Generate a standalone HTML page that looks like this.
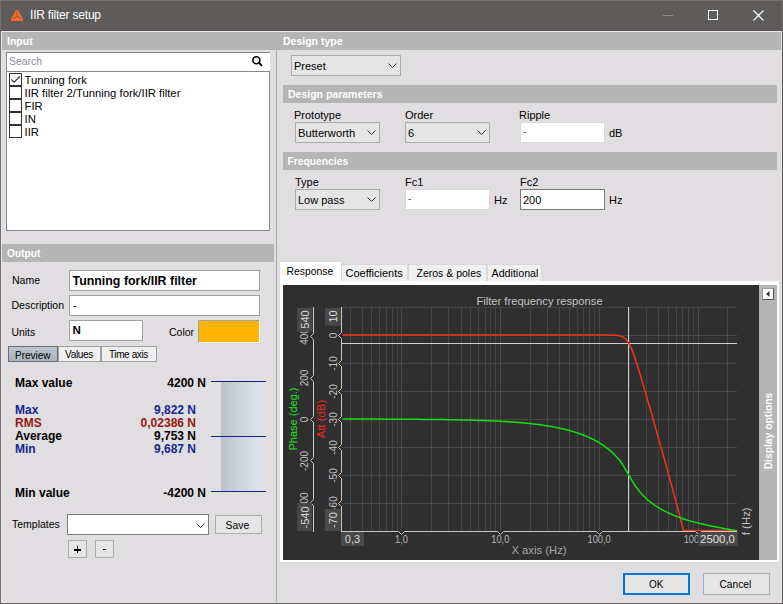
<!DOCTYPE html>
<html><head><meta charset="utf-8">
<style>
html,body{margin:0;padding:0;}
body{width:783px;height:604px;position:relative;overflow:hidden;background:#e0dee0;font-family:"Liberation Sans", sans-serif;font-size:11px;color:#000;}
.a{position:absolute;}
.t{position:absolute;white-space:nowrap;line-height:13px;}
.bar{position:absolute;background:#b5b5b5;height:18px;}
.combo{position:absolute;background:#e5e5e5;border:1px solid #acacac;box-sizing:border-box;}
.tb{position:absolute;background:#fff;box-sizing:border-box;}
.btn{position:absolute;background:#e5e5e5;border:1px solid #adadad;box-sizing:border-box;}
svg{display:block;}
</style></head><body>
<div class="a" style="left:0;top:0;width:783px;height:31px;background:#5d5c5a;"></div>
<svg class="a" style="left:10px;top:9px" width="14" height="13" viewBox="0 0 14 13">
<path d="M5.8 1.6 Q7 0 8.2 1.6 L13 10 Q13.6 11.9 11.8 11.9 L2.2 11.9 Q0.4 11.9 1 10 Z" fill="#f26b30"/>
<path d="M7 1.8 L7 7.4 M7 7.4 L2.3 9.9 M7 7.4 L11.7 9.9" stroke="#b0532a" stroke-width="1" fill="none"/>
</svg>
<div class="t" style="left:30px;top:8px;font-size:12px;font-weight:normal;color:#fff;line-height:14px;letter-spacing:-0.2px;">IIR filter setup</div>
<div class="a" style="left:663px;top:15px;width:10px;height:1px;background:#8c8b89;"></div>
<div class="a" style="left:708px;top:10px;width:8px;height:8px;border:1px solid #fff;"></div>
<svg class="a" style="left:753px;top:10px" width="11" height="11" viewBox="0 0 11 11"><path d="M0.5 0.5 L10.5 10.5 M10.5 0.5 L0.5 10.5" stroke="#fff" stroke-width="1.1"/></svg>
<div class="a" style="left:0;top:0;width:783px;height:1px;background:#71706e;"></div>
<div class="a" style="left:0;top:30px;width:783px;height:1px;background:#555452;"></div>
<div class="a" style="left:1px;top:31px;width:781px;height:1px;background:#e8e6e8;"></div>
<div class="a" style="left:1px;top:31px;width:1px;height:572px;background:#e8e6e8;"></div>
<div class="a" style="left:0;top:0;width:1px;height:604px;background:#71706e;"></div>
<div class="a" style="left:782px;top:0;width:1px;height:30px;background:#71706e;"></div>
<div class="a" style="left:782px;top:30px;width:1px;height:574px;background:#555452;"></div>
<div class="a" style="left:781px;top:31px;width:1px;height:572px;background:#e8e6e8;"></div>
<div class="a" style="left:1px;top:602px;width:781px;height:1px;background:#e8e6e8;"></div>
<div class="a" style="left:0;top:603px;width:783px;height:1px;background:#5d5c5a;"></div>
<div class="bar" style="left:2px;top:32px;width:779px;"></div>
<div class="t" style="left:7px;top:35px;font-size:10.5px;font-weight:bold;color:#fff;">Input</div>
<div class="t" style="left:283px;top:35px;font-size:10.5px;font-weight:bold;color:#fff;">Design type</div>
<div class="tb" style="left:6px;top:52px;width:264px;height:19px;border-top:1px solid #8a8a8a;border-left:1px solid #8a8a8a;"></div>
<div class="t" style="left:9px;top:55px;font-size:10.4px;font-weight:normal;color:#8b8b9b;">Search</div>
<svg class="a" style="left:252px;top:55px" width="12" height="12" viewBox="0 0 12 12"><circle cx="4.3" cy="5.2" r="3.5" stroke="#000" stroke-width="1.6" fill="none"/><path d="M6.9 7.8 L10 10.9" stroke="#000" stroke-width="2"/></svg>
<div class="tb" style="left:6px;top:71px;width:264px;height:160px;border:1px solid #828790;"></div>
<div class="a" style="left:9px;top:73px;width:13px;height:13px;border:1px solid #333;background:#fff;box-sizing:border-box;"></div>
<svg class="a" style="left:9px;top:73px" width="13" height="13" viewBox="0 0 13 13"><path d="M2.3 6.5 L5.2 9.2 L10.9 3.3" stroke="#444" stroke-width="1.3" fill="none"/></svg>
<div class="t" style="left:24.5px;top:74px;font-size:11.3px;font-weight:normal;color:#000;">Tunning fork</div>
<div class="a" style="left:9px;top:86px;width:13px;height:13px;border:1px solid #333;background:#fff;box-sizing:border-box;"></div>
<div class="t" style="left:24.5px;top:87px;font-size:11.3px;font-weight:normal;color:#000;">IIR filter 2/Tunning fork/IIR filter</div>
<div class="a" style="left:9px;top:99px;width:13px;height:13px;border:1px solid #333;background:#fff;box-sizing:border-box;"></div>
<div class="t" style="left:24.5px;top:100px;font-size:11.3px;font-weight:normal;color:#000;">FIR</div>
<div class="a" style="left:9px;top:112px;width:13px;height:13px;border:1px solid #333;background:#fff;box-sizing:border-box;"></div>
<div class="t" style="left:24.5px;top:113px;font-size:11.3px;font-weight:normal;color:#000;">IN</div>
<div class="a" style="left:9px;top:125px;width:13px;height:13px;border:1px solid #333;background:#fff;box-sizing:border-box;"></div>
<div class="t" style="left:24.5px;top:126px;font-size:11.3px;font-weight:normal;color:#000;">IIR</div>
<div class="a" style="left:276px;top:50px;width:1px;height:553px;background:#a9a9a9;"></div>
<div class="combo" style="left:291px;top:55px;width:110px;height:21px;"></div>
<div class="t" style="left:294px;top:60px;font-size:11px;font-weight:normal;color:#000;">Preset</div>
<div class="a" style="left:388px;top:63px;"><svg width="9" height="5" viewBox="0 0 9 5"><path d="M0.5 0.5 L4.5 4.5 L8.5 0.5" stroke="#333" stroke-width="1" fill="none"/></svg></div>
<div class="bar" style="left:283px;top:85px;width:494px;"></div>
<div class="t" style="left:288px;top:88px;font-size:10.5px;font-weight:bold;color:#fff;">Design parameters</div>
<div class="t" style="left:294px;top:109px;font-size:11px;font-weight:normal;color:#000;">Prototype</div>
<div class="combo" style="left:295px;top:122px;width:85px;height:21px;"></div>
<div class="t" style="left:298px;top:127px;font-size:11.2px;font-weight:normal;color:#000;">Butterworth</div>
<div class="a" style="left:367px;top:130px;"><svg width="9" height="5" viewBox="0 0 9 5"><path d="M0.5 0.5 L4.5 4.5 L8.5 0.5" stroke="#333" stroke-width="1" fill="none"/></svg></div>
<div class="t" style="left:405px;top:109px;font-size:11px;font-weight:normal;color:#000;">Order</div>
<div class="combo" style="left:405px;top:122px;width:85px;height:21px;"></div>
<div class="t" style="left:408px;top:127px;font-size:11px;font-weight:normal;color:#000;">6</div>
<div class="a" style="left:477px;top:130px;"><svg width="9" height="5" viewBox="0 0 9 5"><path d="M0.5 0.5 L4.5 4.5 L8.5 0.5" stroke="#333" stroke-width="1" fill="none"/></svg></div>
<div class="t" style="left:519px;top:109px;font-size:11px;font-weight:normal;color:#000;">Ripple</div>
<div class="tb" style="left:520px;top:122px;width:85px;height:21px;border:1px solid #dadada;"></div>
<div class="t" style="left:523px;top:125px;font-size:10px;font-weight:normal;color:#555;">-</div>
<div class="t" style="left:609px;top:127px;font-size:11px;font-weight:normal;color:#000;">dB</div>
<div class="bar" style="left:283px;top:152px;width:494px;"></div>
<div class="t" style="left:287.5px;top:155px;font-size:10.3px;font-weight:bold;color:#fff;">Frequencies</div>
<div class="t" style="left:295px;top:176px;font-size:11px;font-weight:normal;color:#000;">Type</div>
<div class="combo" style="left:295px;top:189px;width:85px;height:21px;"></div>
<div class="t" style="left:298px;top:194px;font-size:11px;font-weight:normal;color:#000;">Low pass</div>
<div class="a" style="left:367px;top:197px;"><svg width="9" height="5" viewBox="0 0 9 5"><path d="M0.5 0.5 L4.5 4.5 L8.5 0.5" stroke="#333" stroke-width="1" fill="none"/></svg></div>
<div class="t" style="left:405px;top:176px;font-size:11px;font-weight:normal;color:#000;">Fc1</div>
<div class="tb" style="left:405px;top:189px;width:85px;height:21px;border:1px solid #dadada;"></div>
<div class="t" style="left:408px;top:192px;font-size:10px;font-weight:normal;color:#555;">-</div>
<div class="t" style="left:494px;top:194px;font-size:11px;font-weight:normal;color:#000;">Hz</div>
<div class="t" style="left:520px;top:176px;font-size:11px;font-weight:normal;color:#000;">Fc2</div>
<div class="tb" style="left:520px;top:189px;width:85px;height:21px;border:1px solid #7a7a7a;"></div>
<div class="t" style="left:523px;top:194px;font-size:11px;font-weight:normal;color:#000;">200</div>
<div class="t" style="left:609px;top:194px;font-size:11px;font-weight:normal;color:#000;">Hz</div>
<div class="a" style="left:280px;top:281px;width:499px;height:281px;background:#fff;"></div>
<div class="a" style="left:280px;top:262px;width:61px;height:20px;background:#fff;"></div>
<div class="t" style="left:286.5px;top:265px;font-size:10.4px;font-weight:normal;color:#000;">Response</div>
<div class="a" style="left:341px;top:264px;width:67px;height:17px;background:#f0f0f0;border:1px solid #d9d9d9;border-bottom:none;box-sizing:border-box;"></div>
<div class="t" style="left:345.5px;top:267px;font-size:11px;font-weight:normal;color:#000;">Coefficients</div>
<div class="a" style="left:408px;top:264px;width:79px;height:17px;background:#f0f0f0;border:1px solid #d9d9d9;border-bottom:none;box-sizing:border-box;"></div>
<div class="t" style="left:416.5px;top:267px;font-size:10.5px;font-weight:normal;color:#000;">Zeros &amp; poles</div>
<div class="a" style="left:487px;top:264px;width:55px;height:17px;background:#f0f0f0;border:1px solid #d9d9d9;border-bottom:none;box-sizing:border-box;"></div>
<div class="t" style="left:491.5px;top:267px;font-size:10.7px;font-weight:normal;color:#000;">Additional</div>
<svg style="position:absolute;left:283px;top:285px" width="476" height="275" viewBox="283 285 476 275">
<rect x="283" y="285" width="476" height="275" fill="#2f2f2f"/>
<line x1="350.5" y1="307" x2="350.5" y2="531" stroke="#464646" stroke-width="1"/>
<line x1="362.5" y1="307" x2="362.5" y2="531" stroke="#464646" stroke-width="1"/>
<line x1="371.5" y1="307" x2="371.5" y2="531" stroke="#464646" stroke-width="1"/>
<line x1="379.5" y1="307" x2="379.5" y2="531" stroke="#464646" stroke-width="1"/>
<line x1="386.5" y1="307" x2="386.5" y2="531" stroke="#464646" stroke-width="1"/>
<line x1="392.5" y1="307" x2="392.5" y2="531" stroke="#464646" stroke-width="1"/>
<line x1="397.5" y1="307" x2="397.5" y2="531" stroke="#464646" stroke-width="1"/>
<line x1="401.5" y1="307" x2="401.5" y2="531" stroke="#4a4a4a" stroke-width="1"/>
<line x1="431.5" y1="307" x2="431.5" y2="531" stroke="#464646" stroke-width="1"/>
<line x1="448.5" y1="307" x2="448.5" y2="531" stroke="#464646" stroke-width="1"/>
<line x1="461.5" y1="307" x2="461.5" y2="531" stroke="#464646" stroke-width="1"/>
<line x1="470.5" y1="307" x2="470.5" y2="531" stroke="#464646" stroke-width="1"/>
<line x1="478.5" y1="307" x2="478.5" y2="531" stroke="#464646" stroke-width="1"/>
<line x1="485.5" y1="307" x2="485.5" y2="531" stroke="#464646" stroke-width="1"/>
<line x1="490.5" y1="307" x2="490.5" y2="531" stroke="#464646" stroke-width="1"/>
<line x1="495.5" y1="307" x2="495.5" y2="531" stroke="#464646" stroke-width="1"/>
<line x1="500.5" y1="307" x2="500.5" y2="531" stroke="#4a4a4a" stroke-width="1"/>
<line x1="530.5" y1="307" x2="530.5" y2="531" stroke="#464646" stroke-width="1"/>
<line x1="547.5" y1="307" x2="547.5" y2="531" stroke="#464646" stroke-width="1"/>
<line x1="559.5" y1="307" x2="559.5" y2="531" stroke="#464646" stroke-width="1"/>
<line x1="569.5" y1="307" x2="569.5" y2="531" stroke="#464646" stroke-width="1"/>
<line x1="577.5" y1="307" x2="577.5" y2="531" stroke="#464646" stroke-width="1"/>
<line x1="583.5" y1="307" x2="583.5" y2="531" stroke="#464646" stroke-width="1"/>
<line x1="589.5" y1="307" x2="589.5" y2="531" stroke="#464646" stroke-width="1"/>
<line x1="594.5" y1="307" x2="594.5" y2="531" stroke="#464646" stroke-width="1"/>
<line x1="599.5" y1="307" x2="599.5" y2="531" stroke="#4a4a4a" stroke-width="1"/>
<line x1="629.5" y1="307" x2="629.5" y2="531" stroke="#464646" stroke-width="1"/>
<line x1="646.5" y1="307" x2="646.5" y2="531" stroke="#464646" stroke-width="1"/>
<line x1="658.5" y1="307" x2="658.5" y2="531" stroke="#464646" stroke-width="1"/>
<line x1="668.5" y1="307" x2="668.5" y2="531" stroke="#464646" stroke-width="1"/>
<line x1="676.5" y1="307" x2="676.5" y2="531" stroke="#464646" stroke-width="1"/>
<line x1="682.5" y1="307" x2="682.5" y2="531" stroke="#464646" stroke-width="1"/>
<line x1="688.5" y1="307" x2="688.5" y2="531" stroke="#464646" stroke-width="1"/>
<line x1="693.5" y1="307" x2="693.5" y2="531" stroke="#464646" stroke-width="1"/>
<line x1="698.5" y1="307" x2="698.5" y2="531" stroke="#4a4a4a" stroke-width="1"/>
<line x1="727.5" y1="307" x2="727.5" y2="531" stroke="#464646" stroke-width="1"/>
<line x1="342" y1="307.5" x2="737" y2="307.5" stroke="#484848" stroke-width="1"/>
<line x1="342" y1="335.5" x2="737" y2="335.5" stroke="#484848" stroke-width="1"/>
<line x1="342" y1="363.5" x2="737" y2="363.5" stroke="#484848" stroke-width="1"/>
<line x1="342" y1="391.5" x2="737" y2="391.5" stroke="#484848" stroke-width="1"/>
<line x1="342" y1="419.5" x2="737" y2="419.5" stroke="#484848" stroke-width="1"/>
<line x1="342" y1="447.5" x2="737" y2="447.5" stroke="#484848" stroke-width="1"/>
<line x1="342" y1="475.5" x2="737" y2="475.5" stroke="#484848" stroke-width="1"/>
<line x1="342" y1="503.5" x2="737" y2="503.5" stroke="#484848" stroke-width="1"/>
<line x1="342" y1="343.5" x2="737" y2="343.5" stroke="#d0d0d0" stroke-width="1"/>
<line x1="628.5" y1="307" x2="628.5" y2="531" stroke="#d0d0d0" stroke-width="1"/>
<polyline points="342.7,335.0 343.4,335.0 344.0,335.0 344.7,335.0 345.3,335.0 346.0,335.0 346.6,335.0 347.3,335.0 348.0,335.0 348.6,335.0 349.3,335.0 349.9,335.0 350.6,335.0 351.3,335.0 351.9,335.0 352.6,335.0 353.2,335.0 353.9,335.0 354.6,335.0 355.2,335.0 355.9,335.0 356.5,335.0 357.2,335.0 357.8,335.0 358.5,335.0 359.2,335.0 359.8,335.0 360.5,335.0 361.1,335.0 361.8,335.0 362.5,335.0 363.1,335.0 363.8,335.0 364.4,335.0 365.1,335.0 365.7,335.0 366.4,335.0 367.1,335.0 367.7,335.0 368.4,335.0 369.0,335.0 369.7,335.0 370.4,335.0 371.0,335.0 371.7,335.0 372.3,335.0 373.0,335.0 373.7,335.0 374.3,335.0 375.0,335.0 375.6,335.0 376.3,335.0 376.9,335.0 377.6,335.0 378.3,335.0 378.9,335.0 379.6,335.0 380.2,335.0 380.9,335.0 381.6,335.0 382.2,335.0 382.9,335.0 383.5,335.0 384.2,335.0 384.8,335.0 385.5,335.0 386.2,335.0 386.8,335.0 387.5,335.0 388.1,335.0 388.8,335.0 389.5,335.0 390.1,335.0 390.8,335.0 391.4,335.0 392.1,335.0 392.8,335.0 393.4,335.0 394.1,335.0 394.7,335.0 395.4,335.0 396.0,335.0 396.7,335.0 397.4,335.0 398.0,335.0 398.7,335.0 399.3,335.0 400.0,335.0 400.7,335.0 401.3,335.0 402.0,335.0 402.6,335.0 403.3,335.0 404.0,335.0 404.6,335.0 405.3,335.0 405.9,335.0 406.6,335.0 407.2,335.0 407.9,335.0 408.6,335.0 409.2,335.0 409.9,335.0 410.5,335.0 411.2,335.0 411.9,335.0 412.5,335.0 413.2,335.0 413.8,335.0 414.5,335.0 415.1,335.0 415.8,335.0 416.5,335.0 417.1,335.0 417.8,335.0 418.4,335.0 419.1,335.0 419.8,335.0 420.4,335.0 421.1,335.0 421.7,335.0 422.4,335.0 423.1,335.0 423.7,335.0 424.4,335.0 425.0,335.0 425.7,335.0 426.3,335.0 427.0,335.0 427.7,335.0 428.3,335.0 429.0,335.0 429.6,335.0 430.3,335.0 431.0,335.0 431.6,335.0 432.3,335.0 432.9,335.0 433.6,335.0 434.2,335.0 434.9,335.0 435.6,335.0 436.2,335.0 436.9,335.0 437.5,335.0 438.2,335.0 438.9,335.0 439.5,335.0 440.2,335.0 440.8,335.0 441.5,335.0 442.2,335.0 442.8,335.0 443.5,335.0 444.1,335.0 444.8,335.0 445.4,335.0 446.1,335.0 446.8,335.0 447.4,335.0 448.1,335.0 448.7,335.0 449.4,335.0 450.1,335.0 450.7,335.0 451.4,335.0 452.0,335.0 452.7,335.0 453.3,335.0 454.0,335.0 454.7,335.0 455.3,335.0 456.0,335.0 456.6,335.0 457.3,335.0 458.0,335.0 458.6,335.0 459.3,335.0 459.9,335.0 460.6,335.0 461.3,335.0 461.9,335.0 462.6,335.0 463.2,335.0 463.9,335.0 464.5,335.0 465.2,335.0 465.9,335.0 466.5,335.0 467.2,335.0 467.8,335.0 468.5,335.0 469.2,335.0 469.8,335.0 470.5,335.0 471.1,335.0 471.8,335.0 472.4,335.0 473.1,335.0 473.8,335.0 474.4,335.0 475.1,335.0 475.7,335.0 476.4,335.0 477.1,335.0 477.7,335.0 478.4,335.0 479.0,335.0 479.7,335.0 480.4,335.0 481.0,335.0 481.7,335.0 482.3,335.0 483.0,335.0 483.6,335.0 484.3,335.0 485.0,335.0 485.6,335.0 486.3,335.0 486.9,335.0 487.6,335.0 488.3,335.0 488.9,335.0 489.6,335.0 490.2,335.0 490.9,335.0 491.5,335.0 492.2,335.0 492.9,335.0 493.5,335.0 494.2,335.0 494.8,335.0 495.5,335.0 496.2,335.0 496.8,335.0 497.5,335.0 498.1,335.0 498.8,335.0 499.5,335.0 500.1,335.0 500.8,335.0 501.4,335.0 502.1,335.0 502.7,335.0 503.4,335.0 504.1,335.0 504.7,335.0 505.4,335.0 506.0,335.0 506.7,335.0 507.4,335.0 508.0,335.0 508.7,335.0 509.3,335.0 510.0,335.0 510.6,335.0 511.3,335.0 512.0,335.0 512.6,335.0 513.3,335.0 513.9,335.0 514.6,335.0 515.3,335.0 515.9,335.0 516.6,335.0 517.2,335.0 517.9,335.0 518.6,335.0 519.2,335.0 519.9,335.0 520.5,335.0 521.2,335.0 521.8,335.0 522.5,335.0 523.2,335.0 523.8,335.0 524.5,335.0 525.1,335.0 525.8,335.0 526.5,335.0 527.1,335.0 527.8,335.0 528.4,335.0 529.1,335.0 529.7,335.0 530.4,335.0 531.1,335.0 531.7,335.0 532.4,335.0 533.0,335.0 533.7,335.0 534.4,335.0 535.0,335.0 535.7,335.0 536.3,335.0 537.0,335.0 537.7,335.0 538.3,335.0 539.0,335.0 539.6,335.0 540.3,335.0 540.9,335.0 541.6,335.0 542.3,335.0 542.9,335.0 543.6,335.0 544.2,335.0 544.9,335.0 545.6,335.0 546.2,335.0 546.9,335.0 547.5,335.0 548.2,335.0 548.8,335.0 549.5,335.0 550.2,335.0 550.8,335.0 551.5,335.0 552.1,335.0 552.8,335.0 553.5,335.0 554.1,335.0 554.8,335.0 555.4,335.0 556.1,335.0 556.8,335.0 557.4,335.0 558.1,335.0 558.7,335.0 559.4,335.0 560.0,335.0 560.7,335.0 561.4,335.0 562.0,335.0 562.7,335.0 563.3,335.0 564.0,335.0 564.7,335.0 565.3,335.0 566.0,335.0 566.6,335.0 567.3,335.0 567.9,335.0 568.6,335.0 569.3,335.0 569.9,335.0 570.6,335.0 571.2,335.0 571.9,335.0 572.6,335.0 573.2,335.0 573.9,335.0 574.5,335.0 575.2,335.0 575.9,335.0 576.5,335.0 577.2,335.0 577.8,335.0 578.5,335.0 579.1,335.0 579.8,335.0 580.5,335.0 581.1,335.0 581.8,335.0 582.4,335.0 583.1,335.0 583.8,335.0 584.4,335.0 585.1,335.0 585.7,335.0 586.4,335.0 587.0,335.0 587.7,335.0 588.4,335.0 589.0,335.0 589.7,335.0 590.3,335.0 591.0,335.0 591.7,335.0 592.3,335.0 593.0,335.0 593.6,335.0 594.3,335.0 595.0,335.0 595.6,335.0 596.3,335.0 596.9,335.0 597.6,335.0 598.2,335.0 598.9,335.0 599.6,335.0 600.2,335.0 600.9,335.0 601.5,335.0 602.2,335.0 602.9,335.0 603.5,335.0 604.2,335.0 604.8,335.0 605.5,335.0 606.1,335.0 606.8,335.0 607.5,335.0 608.1,335.0 608.8,335.0 609.4,335.1 610.1,335.1 610.8,335.1 611.4,335.1 612.1,335.1 612.7,335.1 613.4,335.2 614.1,335.2 614.7,335.2 615.4,335.3 616.0,335.3 616.7,335.4 617.3,335.5 618.0,335.6 618.7,335.7 619.3,335.8 620.0,336.0 620.6,336.1 621.3,336.4 622.0,336.6 622.6,336.9 623.3,337.3 623.9,337.7 624.6,338.2 625.2,338.8 625.9,339.4 626.6,340.1 627.2,341.0 627.9,341.9 628.5,342.9 629.2,344.1 629.9,345.3 630.5,346.7 631.2,348.1 631.8,349.6 632.5,351.3 633.2,353.0 633.8,354.8 634.5,356.6 635.1,358.5 635.8,360.5 636.4,362.5 637.1,364.6 637.8,366.7 638.4,368.8 639.1,370.9 639.7,373.1 640.4,375.3 641.1,377.5 641.7,379.7 642.4,382.0 643.0,384.2 643.7,386.5 644.3,388.7 645.0,391.0 645.7,393.2 646.3,395.5 647.0,397.8 647.6,400.1 648.3,402.4 649.0,404.7 649.6,407.0 650.3,409.3 650.9,411.6 651.6,413.9 652.3,416.2 652.9,418.5 653.6,420.8 654.2,423.1 654.9,425.4 655.5,427.8 656.2,430.1 656.9,432.4 657.5,434.7 658.2,437.1 658.8,439.4 659.5,441.7 660.2,444.1 660.8,446.4 661.5,448.8 662.1,451.1 662.8,453.5 663.5,455.9 664.1,458.2 664.8,460.6 665.4,463.0 666.1,465.3 666.7,467.7 667.4,470.1 668.1,472.5 668.7,474.9 669.4,477.3 670.0,479.7 670.7,482.1 671.4,484.5 672.0,487.0 672.7,489.4 673.3,491.8 674.0,494.3 674.6,496.7 675.3,499.2 676.0,501.6 676.6,504.1 677.3,506.6 677.9,509.1 678.6,511.6 679.3,514.1 679.9,516.6 680.6,519.1 681.2,521.6 681.9,524.2 682.6,526.7 683.2,529.3 683.9,530.5 684.5,530.5 685.2,530.5 685.8,530.5 686.5,530.5 687.2,530.5 687.8,530.5 688.5,530.5 689.1,530.5 689.8,530.5 690.5,530.5 691.1,530.5 691.8,530.5 692.4,530.5 693.1,530.5 693.7,530.5 694.4,530.5 695.1,530.5 695.7,530.5 696.4,530.5 697.0,530.5 697.7,530.5 698.4,530.5 699.0,530.5 699.7,530.5 700.3,530.5 701.0,530.5 701.7,530.5 702.3,530.5 703.0,530.5 703.6,530.5 704.3,530.5 704.9,530.5 705.6,530.5 706.3,530.5 706.9,530.5 707.6,530.5 708.2,530.5 708.9,530.5 709.6,530.5 710.2,530.5 710.9,530.5 711.5,530.5 712.2,530.5 712.8,530.5 713.5,530.5 714.2,530.5 714.8,530.5 715.5,530.5 716.1,530.5 716.8,530.5 717.5,530.5 718.1,530.5 718.8,530.5 719.4,530.5 720.1,530.5 720.8,530.5 721.4,530.5 722.1,530.5 722.7,530.5 723.4,530.5 724.0,530.5 724.7,530.5 725.4,530.5 726.0,530.5 726.7,530.5 727.3,530.5 728.0,530.5 728.7,530.5 729.3,530.5 730.0,530.5 730.6,530.5 731.3,530.5 731.9,530.5 732.6,530.5 733.3,530.5 733.9,530.5 734.6,530.5 735.2,530.5 735.9,530.5 736.6,530.5 737.2,530.5" fill="none" stroke="#f53214" stroke-width="1.5"/>
<polyline points="342.7,419.1 343.4,419.1 344.0,419.1 344.7,419.1 345.3,419.1 346.0,419.1 346.6,419.1 347.3,419.1 348.0,419.1 348.6,419.1 349.3,419.1 349.9,419.1 350.6,419.1 351.3,419.1 351.9,419.1 352.6,419.1 353.2,419.1 353.9,419.1 354.6,419.1 355.2,419.1 355.9,419.1 356.5,419.1 357.2,419.1 357.8,419.1 358.5,419.1 359.2,419.1 359.8,419.1 360.5,419.1 361.1,419.1 361.8,419.1 362.5,419.1 363.1,419.1 363.8,419.1 364.4,419.1 365.1,419.1 365.7,419.1 366.4,419.1 367.1,419.1 367.7,419.1 368.4,419.1 369.0,419.1 369.7,419.1 370.4,419.1 371.0,419.1 371.7,419.1 372.3,419.1 373.0,419.1 373.7,419.1 374.3,419.1 375.0,419.1 375.6,419.1 376.3,419.1 376.9,419.1 377.6,419.1 378.3,419.1 378.9,419.1 379.6,419.1 380.2,419.1 380.9,419.1 381.6,419.1 382.2,419.1 382.9,419.1 383.5,419.2 384.2,419.2 384.8,419.2 385.5,419.2 386.2,419.2 386.8,419.2 387.5,419.2 388.1,419.2 388.8,419.2 389.5,419.2 390.1,419.2 390.8,419.2 391.4,419.2 392.1,419.2 392.8,419.2 393.4,419.2 394.1,419.2 394.7,419.2 395.4,419.2 396.0,419.2 396.7,419.2 397.4,419.2 398.0,419.2 398.7,419.2 399.3,419.2 400.0,419.2 400.7,419.2 401.3,419.2 402.0,419.2 402.6,419.2 403.3,419.2 404.0,419.2 404.6,419.2 405.3,419.2 405.9,419.3 406.6,419.3 407.2,419.3 407.9,419.3 408.6,419.3 409.2,419.3 409.9,419.3 410.5,419.3 411.2,419.3 411.9,419.3 412.5,419.3 413.2,419.3 413.8,419.3 414.5,419.3 415.1,419.3 415.8,419.3 416.5,419.3 417.1,419.3 417.8,419.3 418.4,419.3 419.1,419.3 419.8,419.3 420.4,419.4 421.1,419.4 421.7,419.4 422.4,419.4 423.1,419.4 423.7,419.4 424.4,419.4 425.0,419.4 425.7,419.4 426.3,419.4 427.0,419.4 427.7,419.4 428.3,419.4 429.0,419.4 429.6,419.4 430.3,419.4 431.0,419.5 431.6,419.5 432.3,419.5 432.9,419.5 433.6,419.5 434.2,419.5 434.9,419.5 435.6,419.5 436.2,419.5 436.9,419.5 437.5,419.5 438.2,419.5 438.9,419.5 439.5,419.6 440.2,419.6 440.8,419.6 441.5,419.6 442.2,419.6 442.8,419.6 443.5,419.6 444.1,419.6 444.8,419.6 445.4,419.6 446.1,419.6 446.8,419.7 447.4,419.7 448.1,419.7 448.7,419.7 449.4,419.7 450.1,419.7 450.7,419.7 451.4,419.7 452.0,419.7 452.7,419.8 453.3,419.8 454.0,419.8 454.7,419.8 455.3,419.8 456.0,419.8 456.6,419.8 457.3,419.8 458.0,419.9 458.6,419.9 459.3,419.9 459.9,419.9 460.6,419.9 461.3,419.9 461.9,419.9 462.6,419.9 463.2,420.0 463.9,420.0 464.5,420.0 465.2,420.0 465.9,420.0 466.5,420.0 467.2,420.1 467.8,420.1 468.5,420.1 469.2,420.1 469.8,420.1 470.5,420.1 471.1,420.2 471.8,420.2 472.4,420.2 473.1,420.2 473.8,420.2 474.4,420.2 475.1,420.3 475.7,420.3 476.4,420.3 477.1,420.3 477.7,420.3 478.4,420.4 479.0,420.4 479.7,420.4 480.4,420.4 481.0,420.5 481.7,420.5 482.3,420.5 483.0,420.5 483.6,420.5 484.3,420.6 485.0,420.6 485.6,420.6 486.3,420.6 486.9,420.7 487.6,420.7 488.3,420.7 488.9,420.8 489.6,420.8 490.2,420.8 490.9,420.8 491.5,420.9 492.2,420.9 492.9,420.9 493.5,421.0 494.2,421.0 494.8,421.0 495.5,421.0 496.2,421.1 496.8,421.1 497.5,421.1 498.1,421.2 498.8,421.2 499.5,421.2 500.1,421.3 500.8,421.3 501.4,421.3 502.1,421.4 502.7,421.4 503.4,421.5 504.1,421.5 504.7,421.5 505.4,421.6 506.0,421.6 506.7,421.7 507.4,421.7 508.0,421.7 508.7,421.8 509.3,421.8 510.0,421.9 510.6,421.9 511.3,422.0 512.0,422.0 512.6,422.0 513.3,422.1 513.9,422.1 514.6,422.2 515.3,422.2 515.9,422.3 516.6,422.3 517.2,422.4 517.9,422.4 518.6,422.5 519.2,422.6 519.9,422.6 520.5,422.7 521.2,422.7 521.8,422.8 522.5,422.8 523.2,422.9 523.8,423.0 524.5,423.0 525.1,423.1 525.8,423.1 526.5,423.2 527.1,423.3 527.8,423.3 528.4,423.4 529.1,423.5 529.7,423.5 530.4,423.6 531.1,423.7 531.7,423.8 532.4,423.8 533.0,423.9 533.7,424.0 534.4,424.1 535.0,424.1 535.7,424.2 536.3,424.3 537.0,424.4 537.7,424.5 538.3,424.5 539.0,424.6 539.6,424.7 540.3,424.8 540.9,424.9 541.6,425.0 542.3,425.1 542.9,425.2 543.6,425.3 544.2,425.4 544.9,425.5 545.6,425.6 546.2,425.7 546.9,425.8 547.5,425.9 548.2,426.0 548.8,426.1 549.5,426.2 550.2,426.3 550.8,426.4 551.5,426.6 552.1,426.7 552.8,426.8 553.5,426.9 554.1,427.0 554.8,427.2 555.4,427.3 556.1,427.4 556.8,427.5 557.4,427.7 558.1,427.8 558.7,428.0 559.4,428.1 560.0,428.2 560.7,428.4 561.4,428.5 562.0,428.7 562.7,428.8 563.3,429.0 564.0,429.1 564.7,429.3 565.3,429.5 566.0,429.6 566.6,429.8 567.3,430.0 567.9,430.1 568.6,430.3 569.3,430.5 569.9,430.7 570.6,430.8 571.2,431.0 571.9,431.2 572.6,431.4 573.2,431.6 573.9,431.8 574.5,432.0 575.2,432.2 575.9,432.4 576.5,432.6 577.2,432.9 577.8,433.1 578.5,433.3 579.1,433.5 579.8,433.8 580.5,434.0 581.1,434.2 581.8,434.5 582.4,434.7 583.1,435.0 583.8,435.2 584.4,435.5 585.1,435.8 585.7,436.0 586.4,436.3 587.0,436.6 587.7,436.9 588.4,437.1 589.0,437.4 589.7,437.7 590.3,438.0 591.0,438.4 591.7,438.7 592.3,439.0 593.0,439.3 593.6,439.6 594.3,440.0 595.0,440.3 595.6,440.7 596.3,441.0 596.9,441.4 597.6,441.8 598.2,442.2 598.9,442.5 599.6,442.9 600.2,443.3 600.9,443.7 601.5,444.2 602.2,444.6 602.9,445.0 603.5,445.5 604.2,445.9 604.8,446.4 605.5,446.9 606.1,447.3 606.8,447.8 607.5,448.3 608.1,448.9 608.8,449.4 609.4,449.9 610.1,450.5 610.8,451.1 611.4,451.6 612.1,452.2 612.7,452.9 613.4,453.5 614.1,454.1 614.7,454.8 615.4,455.5 616.0,456.2 616.7,456.9 617.3,457.7 618.0,458.5 618.7,459.3 619.3,460.1 620.0,460.9 620.6,461.8 621.3,462.7 622.0,463.7 622.6,464.6 623.3,465.6 623.9,466.7 624.6,467.7 625.2,468.8 625.9,469.9 626.6,471.0 627.2,472.2 627.9,473.3 628.5,474.5 629.2,475.6 629.9,476.8 630.5,478.0 631.2,479.1 631.8,480.2 632.5,481.3 633.2,482.4 633.8,483.5 634.5,484.5 635.1,485.5 635.8,486.5 636.4,487.4 637.1,488.3 637.8,489.2 638.4,490.1 639.1,490.9 639.7,491.7 640.4,492.5 641.1,493.2 641.7,494.0 642.4,494.7 643.0,495.4 643.7,496.0 644.3,496.7 645.0,497.3 645.7,498.0 646.3,498.6 647.0,499.2 647.6,499.7 648.3,500.3 649.0,500.8 649.6,501.4 650.3,501.9 650.9,502.4 651.6,502.9 652.3,503.4 652.9,503.9 653.6,504.4 654.2,504.8 654.9,505.3 655.5,505.7 656.2,506.2 656.9,506.6 657.5,507.0 658.2,507.4 658.8,507.8 659.5,508.2 660.2,508.6 660.8,509.0 661.5,509.3 662.1,509.7 662.8,510.1 663.5,510.4 664.1,510.8 664.8,511.1 665.4,511.5 666.1,511.8 666.7,512.1 667.4,512.4 668.1,512.7 668.7,513.1 669.4,513.4 670.0,513.7 670.7,514.0 671.4,514.2 672.0,514.5 672.7,514.8 673.3,515.1 674.0,515.4 674.6,515.6 675.3,515.9 676.0,516.2 676.6,516.4 677.3,516.7 677.9,516.9 678.6,517.2 679.3,517.4 679.9,517.6 680.6,517.9 681.2,518.1 681.9,518.3 682.6,518.5 683.2,518.8 683.9,519.0 684.5,519.2 685.2,519.4 685.8,519.6 686.5,519.8 687.2,520.0 687.8,520.2 688.5,520.4 689.1,520.6 689.8,520.8 690.5,521.0 691.1,521.2 691.8,521.4 692.4,521.6 693.1,521.7 693.7,521.9 694.4,522.1 695.1,522.3 695.7,522.4 696.4,522.6 697.0,522.8 697.7,522.9 698.4,523.1 699.0,523.3 699.7,523.4 700.3,523.6 701.0,523.7 701.7,523.9 702.3,524.0 703.0,524.2 703.6,524.3 704.3,524.5 704.9,524.6 705.6,524.8 706.3,524.9 706.9,525.1 707.6,525.2 708.2,525.4 708.9,525.5 709.6,525.6 710.2,525.8 710.9,525.9 711.5,526.0 712.2,526.2 712.8,526.3 713.5,526.4 714.2,526.6 714.8,526.7 715.5,526.8 716.1,526.9 716.8,527.1 717.5,527.2 718.1,527.3 718.8,527.5 719.4,527.6 720.1,527.7 720.8,527.8 721.4,527.9 722.1,528.1 722.7,528.2 723.4,528.3 724.0,528.4 724.7,528.6 725.4,528.7 726.0,528.8 726.7,528.9 727.3,529.1 728.0,529.2 728.7,529.3 729.3,529.4 730.0,529.6 730.6,529.7 731.3,529.8 731.9,529.9 732.6,530.1 733.3,530.2 733.9,530.3 734.6,530.5 735.2,530.6 735.9,530.7 736.6,530.9 737.2,531.0" fill="none" stroke="#10e010" stroke-width="1.5"/>
<polyline points="341.5,307 341.5,332.5 338.5,335.5 341.5,338.5 341.5,360.5 338.5,363.5 341.5,366.5 341.5,388.5 338.5,391.5 341.5,394.5 341.5,416.5 338.5,419.5 341.5,422.5 341.5,444.5 338.5,447.5 341.5,450.5 341.5,472.5 338.5,475.5 341.5,478.5 341.5,500.5 338.5,503.5 341.5,506.5 341.5,532" fill="none" stroke="#c8c8c8" stroke-width="1"/>
<polyline points="313.5,307 313.5,333.5 310.5,336.5 313.5,339.5 313.5,375.5 310.5,378.5 313.5,381.5 313.5,416.5 310.5,419.5 313.5,422.5 313.5,457.5 310.5,460.5 313.5,463.5 313.5,499.5 310.5,502.5 313.5,505.5 313.5,532" fill="none" stroke="#c8c8c8" stroke-width="1"/>
<polyline points="341,531.5 398.5,531.5 401.5,534.5 404.5,531.5 497.5,531.5 500.5,534.5 503.5,531.5 596.5,531.5 599.5,534.5 602.5,531.5 695.5,531.5 698.5,534.5 701.5,531.5 737,531.5" fill="none" stroke="#c8c8c8" stroke-width="1"/>
<text transform="translate(336.6,335.5) rotate(-90)" text-anchor="middle" font-family="Liberation Sans, sans-serif" font-size="10" fill="#c4c4c4">0</text>
<text transform="translate(336.6,363.5) rotate(-90)" text-anchor="middle" font-family="Liberation Sans, sans-serif" font-size="10" fill="#c4c4c4">-10</text>
<text transform="translate(336.6,391.5) rotate(-90)" text-anchor="middle" font-family="Liberation Sans, sans-serif" font-size="10" fill="#c4c4c4">-20</text>
<text transform="translate(336.6,419.5) rotate(-90)" text-anchor="middle" font-family="Liberation Sans, sans-serif" font-size="10" fill="#c4c4c4">-30</text>
<text transform="translate(336.6,447.5) rotate(-90)" text-anchor="middle" font-family="Liberation Sans, sans-serif" font-size="10" fill="#c4c4c4">-40</text>
<text transform="translate(336.6,475.5) rotate(-90)" text-anchor="middle" font-family="Liberation Sans, sans-serif" font-size="10" fill="#c4c4c4">-50</text>
<text transform="translate(336.6,503.5) rotate(-90)" text-anchor="middle" font-family="Liberation Sans, sans-serif" font-size="10" fill="#c4c4c4">-60</text>
<text transform="translate(308.4,336.5) rotate(-90)" text-anchor="middle" font-family="Liberation Sans, sans-serif" font-size="10" fill="#c4c4c4">400</text>
<text transform="translate(308.4,378.0) rotate(-90)" text-anchor="middle" font-family="Liberation Sans, sans-serif" font-size="10" fill="#c4c4c4">200</text>
<text transform="translate(308.4,419.5) rotate(-90)" text-anchor="middle" font-family="Liberation Sans, sans-serif" font-size="10" fill="#c4c4c4">0</text>
<text transform="translate(308.4,461.0) rotate(-90)" text-anchor="middle" font-family="Liberation Sans, sans-serif" font-size="10" fill="#c4c4c4">-200</text>
<text transform="translate(308.4,502.5) rotate(-90)" text-anchor="middle" font-family="Liberation Sans, sans-serif" font-size="10" fill="#c4c4c4">-400</text>
<rect x="297" y="308" width="15.5" height="23.5" fill="#484848"/>
<text transform="translate(308.8,319.5) rotate(-90)" text-anchor="middle" font-family="Liberation Sans, sans-serif" font-size="11" fill="#d8d8d8">540</text>
<rect x="325" y="308" width="15.7" height="17.7" fill="#484848"/>
<text transform="translate(337,316.4) rotate(-90)" text-anchor="middle" font-family="Liberation Sans, sans-serif" font-size="11" fill="#d8d8d8">10</text>
<rect x="297" y="503" width="15" height="28" fill="#484848"/>
<text transform="translate(308.8,517.5) rotate(-90)" text-anchor="middle" font-family="Liberation Sans, sans-serif" font-size="11" fill="#d8d8d8">-540</text>
<rect x="325" y="509" width="15.7" height="22" fill="#484848"/>
<text transform="translate(337,520) rotate(-90)" text-anchor="middle" font-family="Liberation Sans, sans-serif" font-size="11" fill="#d8d8d8">-70</text>
<text transform="translate(296.5,419) rotate(-90)" text-anchor="middle" font-family="Liberation Sans, sans-serif" font-size="11" fill="#22e022">Phase (deg.)</text>
<text transform="translate(325.3,419) rotate(-90)" text-anchor="middle" font-family="Liberation Sans, sans-serif" font-size="11.3" fill="#f02a1a">Att (dB)</text>
<text transform="translate(749.8,521.3) rotate(-90)" text-anchor="middle" font-family="Liberation Sans, sans-serif" font-size="11.4" fill="#c0c0c0">f (Hz)</text>
<text transform="translate(401.5,543) scale(0.88,1)" text-anchor="middle" font-family="Liberation Sans, sans-serif" font-size="10.6" fill="#b4b4b4">1,0</text>
<text transform="translate(500.3,543) scale(0.88,1)" text-anchor="middle" font-family="Liberation Sans, sans-serif" font-size="10.6" fill="#b4b4b4">10,0</text>
<text transform="translate(599.1,543) scale(0.88,1)" text-anchor="middle" font-family="Liberation Sans, sans-serif" font-size="10.6" fill="#b4b4b4">100,0</text>
<text transform="translate(697.9,543) scale(0.88,1)" text-anchor="middle" font-family="Liberation Sans, sans-serif" font-size="10.6" fill="#b4b4b4">1000,0</text>
<rect x="341" y="532" width="23" height="14" fill="#484848"/>
<text x="352.5" y="543" text-anchor="middle" font-family="Liberation Sans, sans-serif" font-size="11" fill="#d8d8d8">0,3</text>
<rect x="698" y="532" width="40" height="14" fill="#484848"/>
<text x="717.5" y="543" text-anchor="middle" font-family="Liberation Sans, sans-serif" font-size="11.4" fill="#e0e0e0">2500,0</text>
<text x="539" y="553.5" text-anchor="middle" font-family="Liberation Sans, sans-serif" font-size="11.3" fill="#a8a8a8">X axis (Hz)</text>
<text x="539.5" y="305" text-anchor="middle" font-family="Liberation Sans, sans-serif" font-size="11.2" fill="#c4c4c4">Filter frequency response</text>
</svg><div class="a" style="left:759px;top:285px;width:18px;height:275px;background:#b4b4b4;"></div>
<div class="a" style="left:762px;top:288px;width:12px;height:12px;background:#fff;border:1px solid #555;border-top-color:#999;border-left-color:#999;box-sizing:border-box;"></div>
<svg class="a" style="left:765px;top:290px" width="6" height="8" viewBox="0 0 6 8"><path d="M4.5 1 L1 4 L4.5 7 Z" fill="#333"/></svg>
<svg class="a" style="left:759px;top:380px" width="18" height="100" viewBox="0 0 18 100"><text transform="translate(13,51) rotate(-90)" text-anchor="middle" font-family="Liberation Sans, sans-serif" font-size="10.3" font-weight="bold" fill="#fff">Display options</text></svg>
<div class="bar" style="left:2px;top:244px;width:272px;"></div>
<div class="t" style="left:7px;top:247px;font-size:10.2px;font-weight:bold;color:#fff;">Output</div>
<div class="t" style="left:12px;top:274px;font-size:10.5px;font-weight:normal;color:#000;">Name</div>
<div class="tb" style="left:69px;top:270px;width:191px;height:21px;border:1px solid #a0a0a0;"></div>
<div class="t" style="left:72.5px;top:275px;font-size:12.4px;font-weight:bold;color:#000;">Tunning fork/IIR filter</div>
<div class="t" style="left:11.5px;top:299px;font-size:10.5px;font-weight:normal;color:#000;">Description</div>
<div class="tb" style="left:69px;top:295px;width:191px;height:21px;border:1px solid #a0a0a0;"></div>
<div class="t" style="left:73px;top:299px;font-size:11px;font-weight:normal;color:#000;">-</div>
<div class="t" style="left:11.5px;top:326px;font-size:10.4px;font-weight:normal;color:#000;">Units</div>
<div class="tb" style="left:69px;top:320px;width:74px;height:21px;border:1px solid #a0a0a0;"></div>
<div class="t" style="left:72.5px;top:324px;font-size:11.5px;font-weight:bold;color:#000;">N</div>
<div class="t" style="left:169px;top:326px;font-size:10.5px;font-weight:normal;color:#000;">Color</div>
<div class="a" style="left:198px;top:320px;width:62px;height:23px;background:#ffb400;border:1px solid #fff;border-top-color:#a0a0a0;border-left-color:#a0a0a0;box-sizing:border-box;"></div>
<div class="btn" style="left:8px;top:346px;width:50px;height:16px;background:linear-gradient(#bcc4d0,#a9b2c0);border-color:#6d6d6d;"></div>
<div class="t" style="left:15px;top:349px;font-size:10px;font-weight:normal;color:#000;">Preview</div>
<div class="btn" style="left:58px;top:346px;width:43px;height:16px;background:#f0f0f0;border-color:#a0a0a0;"></div>
<div class="t" style="left:65px;top:348px;font-size:10px;font-weight:normal;color:#000;letter-spacing:-0.3px;">Values</div>
<div class="btn" style="left:101px;top:346px;width:56px;height:16px;background:#f0f0f0;border-color:#a0a0a0;"></div>
<div class="t" style="left:109px;top:348px;font-size:10px;font-weight:normal;color:#000;letter-spacing:-0.4px;">Time axis</div>
<div class="t" style="left:15px;top:377px;font-size:12px;font-weight:bold;color:#000;">Max value</div>
<div class="t" style="left:6px;width:200px;text-align:right;top:377px;font-size:12px;font-weight:bold;color:#000;">4200 N</div>
<div class="t" style="left:15px;top:404px;font-size:12px;font-weight:bold;color:#182890;">Max</div>
<div class="t" style="left:-4px;width:200px;text-align:right;top:404px;font-size:12px;font-weight:bold;color:#182890;">9,822 N</div>
<div class="t" style="left:15px;top:417px;font-size:12px;font-weight:bold;color:#981818;">RMS</div>
<div class="t" style="left:-4px;width:200px;text-align:right;top:417px;font-size:12px;font-weight:bold;color:#981818;">0,02386 N</div>
<div class="t" style="left:15px;top:430px;font-size:12px;font-weight:bold;color:#000;">Average</div>
<div class="t" style="left:-4px;width:200px;text-align:right;top:430px;font-size:12px;font-weight:bold;color:#000;">9,753 N</div>
<div class="t" style="left:15px;top:443px;font-size:12px;font-weight:bold;color:#182890;">Min</div>
<div class="t" style="left:-4px;width:200px;text-align:right;top:443px;font-size:12px;font-weight:bold;color:#182890;">9,687 N</div>
<div class="t" style="left:15px;top:487px;font-size:12px;font-weight:bold;color:#000;">Min value</div>
<div class="t" style="left:6px;width:200px;text-align:right;top:487px;font-size:12px;font-weight:bold;color:#000;">-4200 N</div>
<div class="a" style="left:221px;top:382px;width:40px;height:110px;background:linear-gradient(to right,#bcc0c8,#d0d4dc 50%,#dde2ea);"></div>
<div class="a" style="left:211px;top:381px;width:55px;height:1px;background:#14228c;"></div>
<div class="a" style="left:211px;top:436px;width:55px;height:1px;background:#14228c;"></div>
<div class="a" style="left:211px;top:491px;width:55px;height:1px;background:#14228c;"></div>
<div class="t" style="left:12px;top:518px;font-size:10.5px;font-weight:normal;color:#000;">Templates</div>
<div class="tb" style="left:67px;top:514px;width:142px;height:21px;border:1px solid #7a7a7a;"></div>
<div class="a" style="left:196px;top:523px;"><svg width="9" height="5" viewBox="0 0 9 5"><path d="M0.5 0.5 L4.5 4.5 L8.5 0.5" stroke="#333" stroke-width="1" fill="none"/></svg></div>
<div class="btn" style="left:215px;top:515px;width:47px;height:19px;"></div>
<div class="t" style="left:225.5px;top:519px;font-size:10.4px;font-weight:normal;color:#000;">Save</div>
<div class="btn" style="left:68px;top:540px;width:19px;height:18px;"></div>
<div class="a" style="left:74px;top:549px;width:7px;height:1.5px;background:#000;"></div><div class="a" style="left:76.8px;top:546px;width:1.5px;height:7px;background:#000;"></div>
<div class="btn" style="left:95px;top:540px;width:19px;height:18px;"></div>
<div class="a" style="left:102.5px;top:549px;width:3.5px;height:1px;background:#000;"></div>
<div class="btn" style="left:623px;top:573px;width:67px;height:22px;border:2px solid #0078d7;"></div>
<div class="t" style="left:649px;top:578px;font-size:10px;font-weight:normal;color:#000;">OK</div>
<div class="btn" style="left:703px;top:573px;width:67px;height:22px;"></div>
<div class="t" style="left:719.5px;top:578px;font-size:10.2px;font-weight:normal;color:#000;">Cancel</div>
</body></html>
